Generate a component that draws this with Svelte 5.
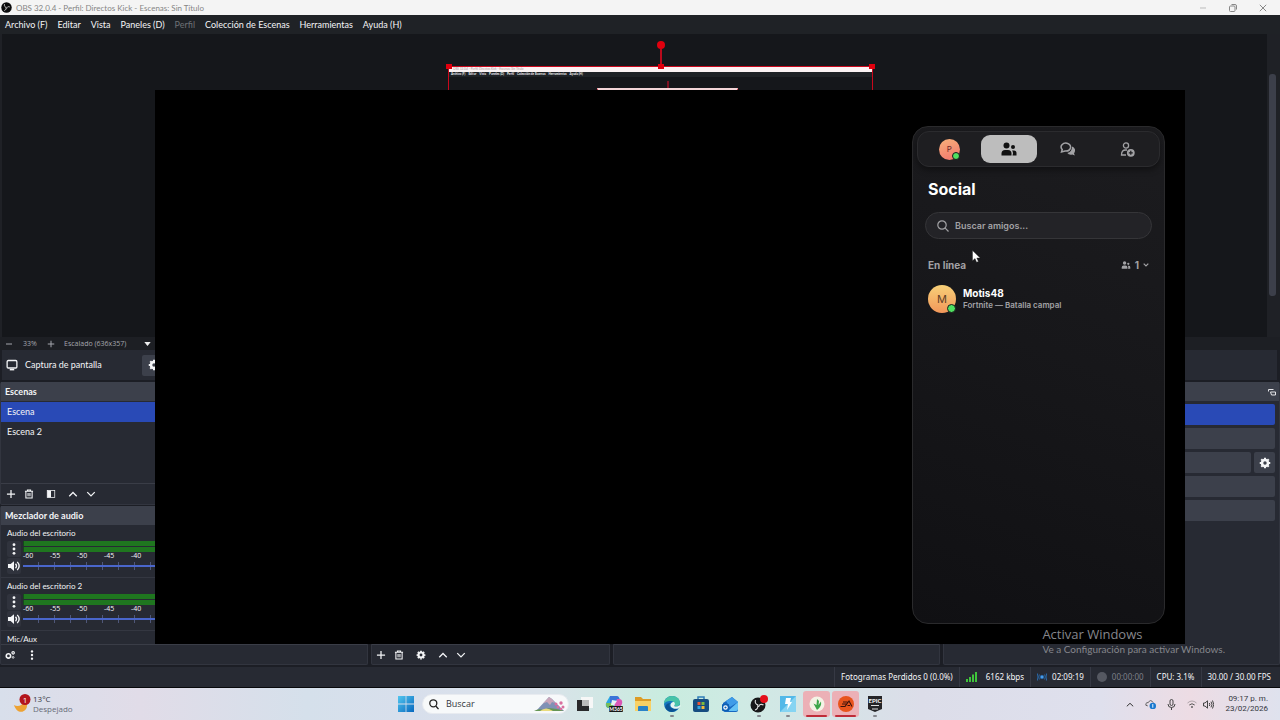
<script>
  const menus = [
    { label: 'Archivo (F)' },
    { label: 'Editar' },
    { label: 'Vista' },
    { label: 'Paneles (D)' },
    { label: 'Perfil', disabled: true },
    { label: 'Colección de Escenas' },
    { label: 'Herramientas' },
    { label: 'Ayuda (H)' }
  ];

  const scenes = ['Escena', 'Escena 2'];
  let activeScene = $state('Escena');

  const mixers = [
    { name: 'Audio del escritorio', volume: 100 },
    { name: 'Audio del escritorio 2', volume: 100 }
  ];
  const meterMarks = [-60, -55, -50, -45, -40, -35, -30, -25, -20, -15, -10, -5, 0];

  let scale = $state('window');
  let search = $state('');
  let socialTab = $state('friends');

  const taskbarApps = [
    { id: 'taskview', label: 'Vista de tareas' },
    { id: 'copilot', label: 'Copilot' },
    { id: 'files', label: 'Explorador de archivos' },
    { id: 'edge', label: 'Edge', running: true },
    { id: 'store', label: 'Microsoft Store' },
    { id: 'mail', label: 'Outlook' },
    { id: 'obs', label: 'OBS Studio', running: true },
    { id: 'fortnite', label: 'Fortnite', running: true },
    { id: 'plant', label: 'Los Sims', alert: true },
    { id: 'ea', label: 'EA', alert: true },
    { id: 'epic', label: 'Epic Games', running: true }
  ];
</script>

{#snippet icon(name)}
  <svg class="icon" viewBox="0 0 16 16" width="12" height="12" fill="none" stroke="currentColor" stroke-width="2" aria-hidden="true">
    {#if name === 'plus'}
      <path d="M8 1.500v13M1.500 8h13" />
    {:else if name === 'minus'}
      <path d="M2 8h12" />
    {:else if name === 'trash'}
      <path d="M1.500 3.500h13M5.500 3V1.500h5V3M3 4v10.500h10V4M6.500 6.500v5M9.500 6.500v5" stroke-width="1.700" />
    {:else if name === 'filter'}
      <rect x="2" y="2.500" width="12" height="11" stroke-width="1.200" />
      <path d="M2 2.500h6v11H2z" fill="currentColor" stroke="none" />
    {:else if name === 'up'}
      <path d="M2 11.500 8 5.500l6 6" />
    {:else if name === 'down'}
      <path d="M2 5 8 11l6-6" />
    {:else if name === 'dots'}
      <g fill="currentColor" stroke="none">
        <circle cx="8" cy="2.200" r="1.900" /><circle cx="8" cy="8" r="1.900" /><circle cx="8" cy="13.800" r="1.900" />
      </g>
    {:else if name === 'gear'}
      <circle cx="8" cy="8" r="4" stroke-width="3.400" />
      <path d="M8 1v2M8 13v2M1 8h2M13 8h2M3 3l1.500 1.500M11.500 11.500 13 13M13 3l-1.500 1.500M4.500 11.500 3 13" stroke-width="2.800" />
    {:else if name === 'gears'}
      <circle cx="5.500" cy="9.500" r="3.500" stroke-width="2.600" />
      <circle cx="13" cy="4.500" r="2" stroke-width="1.800" />
      <circle cx="13" cy="11.800" r="1.400" stroke-width="1.400" />
    {:else if name === 'speaker'}
      <path d="M0 5.200h3.500L8 1.500v13l-4.500-3.700H0z" fill="currentColor" stroke="none" />
      <path d="M10 5c1.600 1.800 1.600 4.200 0 6M12.300 2.500c3.200 3.400 3.200 7.600 0 11" stroke-width="1.800" />
    {:else if name === 'monitor'}
      <rect x="1.500" y="2" width="13" height="10" rx="1.500" stroke-width="1.700" />
      <path d="M5 14.200h6" />
    {/if}
  </svg>
{/snippet}

<div class="desktop">
  <header class="titlebar">
    <svg width="11" height="11" viewBox="0 0 20 20" aria-hidden="true">
      <circle cx="10" cy="10" r="9.500" fill="#0b0b0c" />
      <g fill="none" stroke="#d8d8d8" stroke-width="1.600">
        <path d="M6.500 4c-1.200 3 .5 5.300 3.200 5.500M16 9c-3-1.500-5.500.2-5.700 3M6 15.500c2.800-.8 4-3.400 2.600-5.500" />
      </g>
    </svg>
    <h1>OBS 32.0.4 - Perfil: Directos Kick - Escenas: Sin Título</h1>
    <div class="window-controls">
      <button aria-label="Minimizar"><svg width="8" height="8" viewBox="0 0 8 8"><path d="M1 4h6" stroke="#bbb" /></svg></button>
      <button aria-label="Restaurar">
        <svg width="8" height="8" viewBox="0 0 8 8" fill="none" stroke="#888"><rect x=".5" y="2" width="5.500" height="5.500" rx="1" /><path d="M2.500.5H6q1.500 0 1.500 1.500v3.500" /></svg>
      </button>
      <button aria-label="Cerrar"><svg width="8" height="8" viewBox="0 0 8 8"><path d="m.8.8 6.400 6.400m0-6.400L.8 7.200" stroke="#888" /></svg></button>
    </div>
  </header>

  <nav class="menubar">
    {#each menus as menu}
      <button disabled={menu.disabled}>{menu.label}</button>
    {/each}
  </nav>

  <section class="preview">
    <div class="canvas">
      <div class="source">
        <span class="stem"></span>
        <span class="handle round"></span>
        <span class="handle left"></span>
        <span class="handle middle"></span>
        <span class="handle right"></span>
        <div class="mini-title">OBS 32.0.4 - Perfil: Directos Kick - Escenas: Sin Título</div>
        <div class="mini-menu">
          {#each menus as menu}<span>{menu.label}</span>{/each}
        </div>
        <div class="inner-source"><span class="stem"></span></div>
      </div>
    </div>
    <div class="scroll-track"><div class="scroll-thumb"></div></div>
  </section>

  <div class="zoombar">
    <button aria-label="Alejar">{@render icon('minus')}</button>
    <span class="zoom-value">33%</span>
    <button aria-label="Acercar">{@render icon('plus')}</button>
    <select bind:value={scale} aria-label="Escala">
      <option value="window">Escalado (636x357)</option>
    </select>
    <svg width="7" height="4" viewBox="0 0 8 5" aria-hidden="true"><path d="M0 0h8L4 5z" fill="#eee" /></svg>
  </div>

  <div class="source-toolbar">
    {@render icon('monitor')}
    <span class="source-name">Captura de pantalla</span>
    <button class="btn" aria-label="Propiedades">{@render icon('gear')}</button>
  </div>

  <main class="docks">
    <div class="column">
      <section class="dock scenes">
        <h2>Escenas</h2>
        <div class="scene-list">
          {#each scenes as scene}
            <button class="scene" class:active={scene === activeScene} onclick={() => (activeScene = scene)}>{scene}</button>
          {/each}
        </div>
        <div class="toolbar">
          <button aria-label="Añadir escena">{@render icon('plus')}</button>
          <button aria-label="Eliminar escena">{@render icon('trash')}</button>
          <button class="spaced" aria-label="Filtros">{@render icon('filter')}</button>
          <button class="spaced" aria-label="Subir">{@render icon('up')}</button>
          <button aria-label="Bajar">{@render icon('down')}</button>
        </div>
      </section>

      <section class="dock mixer">
        <h2>Mezclador de audio</h2>
        <div class="channels">
          {#each mixers as mixer, i}
            <div class="channel">
              <label for="volume-{i}">{mixer.name}</label>
              <div class="channel-body">
                <div class="channel-buttons">
                  <button aria-label="Opciones">{@render icon('dots')}</button>
                  <button aria-label="Silenciar">{@render icon('speaker')}</button>
                </div>
                <div class="levels">
                  <div class="meter"><span></span><span></span></div>
                  <div class="marks">
                    {#each meterMarks as mark}<span>{mark}</span>{/each}
                  </div>
                  <input id="volume-{i}" type="range" value={mixer.volume} />
                </div>
              </div>
            </div>
          {/each}
          <div class="channel last"><span class="channel-name">Mic/Aux</span></div>
        </div>
        <div class="toolbar bottom">
          <button aria-label="Propiedades de audio">{@render icon('gears')}</button>
          <button class="spaced" aria-label="Más">{@render icon('dots')}</button>
        </div>
      </section>
    </div>

    <section class="dock">
      <div class="dock-body"></div>
      <div class="toolbar bottom">
        <button aria-label="Añadir fuente">{@render icon('plus')}</button>
        <button aria-label="Eliminar fuente">{@render icon('trash')}</button>
        <button class="spaced" aria-label="Propiedades de fuente">{@render icon('gear')}</button>
        <button class="spaced" aria-label="Subir fuente">{@render icon('up')}</button>
        <button aria-label="Bajar fuente">{@render icon('down')}</button>
      </div>
    </section>

    <section class="dock">
      <div class="dock-body"></div>
      <div class="toolbar bottom"></div>
    </section>

    <section class="dock controls">
      <div class="controls-head">
        <svg width="8" height="8" viewBox="0 0 8 8" fill="none" stroke="#e4e4e8"><path d="M.5 3.500v-2h5M2.500 4h5v3h-4z" /></svg>
      </div>
      <div class="control-list">
        <button class="btn primary" aria-label="Detener transmisión"></button>
        <button class="btn" aria-label="Iniciar grabación"></button>
        <div class="control-row">
          <button class="btn" aria-label="Cámara virtual"></button>
          <button class="btn square" aria-label="Configurar cámara virtual">{@render icon('gear')}</button>
        </div>
        <button class="btn" aria-label="Modo estudio"></button>
        <button class="btn" aria-label="Ajustes"></button>
      </div>
    </section>
  </main>

  <footer class="statusbar">
    <span>Fotogramas Perdidos 0 (0.0%)</span>
    <span class="bitrate">
      <svg width="11" height="10" viewBox="0 0 11 10" fill="#3fc43b"><path d="M0 7h2v3H0zM3 5h2v5H3zM6 2.500h2V10H6zM9 0h2v10H9z" /></svg>
      6162 kbps
    </span>
    <span>
      <svg width="10" height="8" viewBox="0 0 10 8" fill="none" stroke="#2a6cae"><circle cx="5" cy="4" r="1.700" fill="#4a9de8" /><path d="M2.300 1.500q-1.200 2.500 0 5M7.700 1.500q1.200 2.500 0 5M.6.5q-1.200 3.500 0 7M9.400.5q1.200 3.500 0 7" /></svg>
      02:09:19
    </span>
    <span class="idle"><i class="record-dot"></i>00:00:00</span>
    <span>CPU: 3.1%</span>
    <span>30.00 / 30.00 FPS</span>
  </footer>

  <footer class="taskbar">
    <button class="weather">
      <svg width="18" height="20" viewBox="0 0 18 20" aria-hidden="true">
        <path d="M1 11c3 2 8 1.500 10-4 3 2 4 5 2 8-3 4.500-9.500 4-12-4z" fill="#eda233" />
        <circle cx="12" cy="5.500" r="5.500" fill="#b3151c" />
        <text x="12" y="8.500" text-anchor="middle" font-size="8" fill="#fff">1</text>
      </svg>
      <span class="weather-text"><span>13°C</span><span class="muted">Despejado</span></span>
    </button>

    <div class="apps">
      <button class="start" aria-label="Inicio">
        <svg width="16" height="16" viewBox="0 0 16 16">
          <defs><linearGradient id="win" x2="1" y2="1"><stop stop-color="#52c6ef" /><stop offset="1" stop-color="#0868bf" /></linearGradient></defs>
          <path d="M0 0h7.600v7.600H0zM8.400 0H16v7.600H8.400zM0 8.400h7.600V16H0zM8.400 8.400H16V16H8.400z" fill="url(#win)" />
        </svg>
      </button>
      <label class="taskbar-search">
        <svg width="10" height="11" viewBox="0 0 10 11" fill="none" stroke="#222" stroke-width="1.300"><circle cx="4.300" cy="4.300" r="3.500" /><path d="m6.800 7 2.700 3.200" /></svg>
        <input type="text" placeholder="Buscar" aria-label="Buscar en Windows" />
        <svg width="32" height="16" viewBox="0 0 32 16" aria-hidden="true">
          <path d="m2 15 13-14 3 2 12 12z" fill="#7f91b5" />
          <path d="m9 7.500 6-6.500 3 2 3 4-3-1-2 3-3-3z" fill="#c8a5b9" />
          <path d="M0 15q5-3 9-1 6-4 21 1z" fill="#659653" />
          <path d="M6 15q6-5 13 0z" fill="#eadb7c" />
          <g fill="#d96f9f"><circle cx="22" cy="8" r="1.500" /><circle cx="27" cy="7" r="1.700" /><circle cx="29" cy="11" r="1.500" /><circle cx="24" cy="11" r="1.500" /><circle cx="27" cy="13" r="1.200" /></g>
        </svg>
      </label>
      {#each taskbarApps as app}
        <button class="app" class:running={app.running} class:alert={app.alert} aria-label={app.label}>
          <svg width="18" height="18" viewBox="0 0 18 18">
            {#if app.id === 'taskview'}
              <path d="M5 2h12v11H5z" fill="#f7f7f7" /><path d="M1 5h5v6h7v5H1z" fill="#29292b" /><path d="M6 5h7v6H6z" fill="#bbb" />
            {:else if app.id === 'copilot'}
              <path d="M5 1h5l2 4-5 8H3q-3-1-2-5z" fill="#2aa5e5" />
              <path d="M5 1h7q2 0 3 4H8L5 9z" fill="#3b74d8" />
              <path d="M12 4h3q3 1 2 5l-3 5H8z" fill="#d957b5" />
              <path d="M1 8h8l-2 5H3q-2-1-2-3z" fill="#75bd5a" />
              <path d="m7 5 5 1-3 4H6z" fill="#e9eff4" />
              <rect x="4" y="11" width="14" height="6" rx="1" fill="#171717" />
              <text x="11" y="16" font-size="5" font-weight="700" fill="#fff" text-anchor="middle">M365</text>
            {:else if app.id === 'files'}
              <path d="M1 2h6l2 2h8v5H1z" fill="#dd9c26" /><path d="M1 6h16v10H1z" fill="#f8d165" /><path d="M4 12q0-1 1-1h8q1 0 1 1v4H4z" fill="#2a83c8" />
            {:else if app.id === 'edge'}
              <circle cx="9" cy="9" r="8" fill="#1576bf" />
              <path d="M1 9C1 4 5 1 9 1c5 0 8 3 8 7 0 3-3 4-6 3 2-3-1-5-4-5-3 0-5 1-6 3z" fill="#47c3a8" />
              <path d="M7 8c-2 4 2 7 8 5-3 5-9 5-12 1-2-3 1-6 4-6z" fill="#0b5394" />
              <path d="M11 7c1.500 1.300 1 2.700 0 4 2 1 4.500.5 6-1l1 1-3 2.500c-4 1-8-1-7.500-4 .3-1.500 2-3 3.500-2.500z" fill="#e5f5f0" />
            {:else if app.id === 'store'}
              <path d="M6 4V2h6v2" fill="none" stroke="#2f7db8" stroke-width="1.500" /><rect x="1" y="4" width="16" height="13" rx="2" fill="#164d80" />
              <path d="M5.500 7h3v3h-3z" fill="#e85535" /><path d="M9.500 7h3v3h-3z" fill="#7dbb3d" /><path d="M5.500 11h3v3h-3z" fill="#35a5e0" /><path d="M9.500 11h3v3h-3z" fill="#f2ba3a" />
            {:else if app.id === 'mail'}
              <path d="m2 8 9-6 6 5v8q0 2-2 2H5q-3 0-3-2z" fill="#1767c0" /><path d="m5 6 6-4 6 5-8 5z" fill="#3f9ce8" /><path d="m7 16 10-9v7q0 2-2 2z" fill="#65c2f5" />
              <rect x="1" y="9" width="7" height="7" rx="1" fill="#0c5eb4" /><circle cx="4.500" cy="12.500" r="1.700" fill="none" stroke="#fff" stroke-width="1.200" />
            {:else if app.id === 'obs'}
              <circle cx="8" cy="10" r="7.500" fill="#171719" />
              <path d="M5.500 5c-1 3 .8 4.800 2.800 4.800M13.500 10c-2.500-1.500-4.500-.2-4.800 2M5 15c2.500-.8 3.400-3 2.500-4.700" fill="none" stroke="#ddd" stroke-width="1.100" />
              <circle cx="14" cy="4" r="4" fill="#e4101b" />
            {:else if app.id === 'fortnite'}
              <rect x="1" y="1" width="16" height="16" fill="#54b9e8" /><path d="M1 17 17 1v16z" fill="#86d4f2" /><path d="M7 3h5l-1 4h2l-5 8 1-6H6z" fill="#fff" />
            {:else if app.id === 'plant'}
              <circle cx="9" cy="9" r="7.500" fill="#f4f3e6" /><path d="M9 15 5.500 8.500 8.500 10 9 4l2 2-.5 4 2.500-3.500q1 5-4 8.500z" fill="#3ba64a" />
            {:else if app.id === 'ea'}
              <circle cx="9" cy="9" r="8" fill="#e8541c" /><path d="M6 7h4.500M5 9h4.500M3.500 11.500H8l4-5.500 3 5.500M10.500 10.500h2.500" fill="none" stroke="#3a120c" stroke-width="1.100" />
            {:else}
              <path d="M2 1h14v13l-7 3-7-3z" fill="#252528" />
              <text x="9" y="8" font-size="6" font-weight="700" fill="#fff" text-anchor="middle">EPIC</text>
              <path d="M5 10.500h8M6 14h6" stroke="#ddd" />
            {/if}
          </svg>
        </button>
      {/each}
    </div>

    <div class="tray">
      <svg width="8" height="5" viewBox="0 0 8 5" fill="none" stroke="#333"><path d="m.8 4.300 3.200-3 3.200 3" /></svg>
      <svg width="11" height="11" viewBox="0 0 12 11"><path d="M3 7Q0 7 1 4.500 2 3 3.500 3.500 6-1 9 3.500" fill="none" stroke="#555" /><circle cx="8.500" cy="7" r="3.500" fill="#1979cf" /><path d="M8.500 5v4" stroke="#fff" /></svg>
      <svg width="9" height="11" viewBox="0 0 9 11" fill="none" stroke="#444"><rect x="3" y=".5" width="3" height="6" rx="1.500" /><path d="M1 5q0 3.500 3.500 3.500T8 5M4.500 8.500V11" /></svg>
      <span class="tray-group">
        <svg width="10" height="8" viewBox="0 0 10 8" fill="none" stroke="#555"><path d="M.5 3q4.500-4 9 0" opacity=".4" /><path d="M2.300 5q2.700-2.500 5.400 0" /><circle cx="5" cy="7" r=".6" /></svg>
        <svg width="11" height="9" viewBox="0 0 11 9" fill="none" stroke="#444"><path d="M.5 3H2l2.500-2.200v7.400L2 6H.5zM6.300 3q1 1.500 0 3M8 1.700q2 2.800 0 5.600M9.500.5q2.500 4 0 8" /></svg>
      </span>
      <div class="clock"><span>09:17 p. m.</span><span>23/02/2026</span></div>
    </div>
  </footer>

  <div class="overlay">
    <aside class="social">
      <nav class="social-tabs">
        <button class:active={socialTab === 'profile'} aria-label="Perfil" onclick={() => (socialTab = 'profile')}>
          <span class="avatar small">P<i class="online"></i></span>
        </button>
        <button class:active={socialTab === 'friends'} aria-label="Amigos" onclick={() => (socialTab = 'friends')}>
          <svg width="16" height="14" viewBox="0 0 16 14" fill="currentColor"><circle cx="5.500" cy="3.500" r="3" /><path d="M.5 13.500v-2Q.5 8 4 8h3q3.500 0 3.500 3.500v2z" /><circle cx="12" cy="5" r="2" /><path d="M11.500 13.500H15.500V11q0-2.500-2.500-2.500h-2q1 1.200 1 3z" /></svg>
        </button>
        <button class:active={socialTab === 'chat'} aria-label="Mensajes" onclick={() => (socialTab = 'chat')}>
          <svg width="16" height="14" viewBox="0 0 16 14"><path d="M12 4.500q3.500 1.500 3 4.500-.2 1.500-1 2.200l.8 2.300-2.500-1q-3.300.8-5-1.500Q12 10 12 4.500z" fill="currentColor" /><path d="m1.500 10 .7-2.400Q0 5 2 2.700 4 .5 7 1.200q4 1 3.500 4.500Q9.500 9.500 5 9z" fill="none" stroke="currentColor" stroke-width="1.500" /></svg>
        </button>
        <button class:active={socialTab === 'add'} aria-label="Añadir amigo" onclick={() => (socialTab = 'add')}>
          <svg width="15" height="15" viewBox="0 0 15 15"><circle cx="6" cy="3.500" r="2.600" fill="none" stroke="currentColor" stroke-width="1.300" /><path d="M7 8H5.500Q1.500 8 1.500 13H6" fill="none" stroke="currentColor" stroke-width="1.300" /><circle cx="10.800" cy="10.800" r="3.900" fill="currentColor" /><path d="M10.800 8.800v4M8.800 10.800h4" stroke="#1d1d20" stroke-width="1.200" /></svg>
        </button>
      </nav>
      <div class="social-body">
        <h2>Social</h2>
        <label class="friend-search">
          <svg width="12" height="12" viewBox="0 0 12 12" fill="none" stroke="currentColor" stroke-width="1.200"><circle cx="5" cy="5" r="4.200" /><path d="m8.200 8.200 3.300 3.300" /></svg>
          <input type="text" placeholder="Buscar amigos..." aria-label="Buscar amigos" bind:value={search} />
        </label>
        <div class="group">
          <h3>En línea</h3>
          <button class="count">
            <svg width="10" height="8" viewBox="0 0 16 14" fill="currentColor"><circle cx="5.500" cy="3.500" r="3" /><path d="M.5 13.500v-2Q.5 8 4 8h3q3.500 0 3.500 3.500v2z" /><circle cx="12" cy="5" r="2" /><path d="M11.500 13.500H15.500V11q0-2.500-2.500-2.500h-2q1 1.200 1 3z" /></svg>
            1
            <svg width="6" height="4" viewBox="0 0 6 4" fill="none" stroke="currentColor" stroke-width="1.200"><path d="m.7.7 2.300 2.300L5.300.7" /></svg>
          </button>
        </div>
        <div class="friend">
          <span class="avatar">M<i class="online"></i></span>
          <div class="friend-text">
            <strong>Motis48</strong>
            <span>Fortnite — Batalla campal</span>
          </div>
        </div>
      </div>
    </aside>
    <svg class="cursor" width="9" height="13" viewBox="0 0 9 13" aria-hidden="true"><path d="M.5.5v10.300L3 8.600l1.600 3.700 1.800-.8-1.600-3.500h3.400z" fill="#fff" stroke="#222" stroke-width=".4" /></svg>
  </div>

  <div class="watermark">
    <p class="watermark-title">Activar Windows</p>
    <p>Ve a Configuración para activar Windows.</p>
  </div>
</div>

<style>
  :global(body) {
    margin: 0;
    background: #1c1e25;
  }

  .desktop {
    position: relative;
    display: flex;
    flex-direction: column;
    height: 100vh;
    overflow: hidden;
    font-family: Lato, 'Open Sans', sans-serif;
    font-size: 9px;
    line-height: 12px;
    color: #f4f5f7;
  }

  .desktop :is(button, input, select) {
    margin: 0;
    padding: 0;
    border: 0;
    background: none;
    font: inherit;
    color: inherit;
  }

  svg {
    display: block;
    flex: none;
  }

  h1,
  h2,
  h3,
  p {
    margin: 0;
    font-size: inherit;
    font-weight: 400;
  }

  .titlebar {
    display: flex;
    align-items: center;
    gap: 4px;
    height: 15px;
    padding: 0 13px 0 1px;
    background: #f4f4f4;
    color: #858585;
    font-size: 8px;
  }

  .titlebar h1 {
    flex: 1;
  }

  .window-controls {
    display: flex;
    gap: 22px;
  }

  .menubar {
    display: flex;
    gap: 10px;
    height: 19px;
    box-sizing: border-box;
    padding: 0 5px;
    background: #1f2226;
  }

  .menubar button:disabled {
    color: #6d7075;
  }

  .preview {
    display: flex;
    height: 303px;
    background: #1f2126;
  }

  .canvas {
    position: relative;
    flex: 1;
    margin-left: 2px;
    background: #15171b;
    overflow: hidden;
  }

  .scroll-track {
    width: 13px;
    padding: 40px 4px 41px 2px;
    box-sizing: border-box;
  }

  .scroll-thumb {
    height: 100%;
    border-radius: 3px;
    background: #3c3f4a;
  }

  .source {
    position: absolute;
    top: 32px;
    left: 446px;
    width: 425px;
    height: 238px;
    box-sizing: border-box;
    border: 1px solid #c9081c;
    background: #15171b;
    font-size: 3px;
    line-height: 5px;
  }

  .stem {
    position: absolute;
    top: -18px;
    left: calc(50% - 1px);
    width: 2px;
    height: 18px;
    background: #b90a1c;
  }

  .handle {
    position: absolute;
    top: -3px;
    width: 6px;
    height: 5px;
    background: #e0000e;
  }

  .handle.left {
    left: -3px;
  }

  .handle.middle {
    left: calc(50% - 3px);
  }

  .handle.right {
    right: -3px;
  }

  .handle.round {
    top: -26px;
    left: calc(50% - 4px);
    width: 8px;
    height: 8px;
    border-radius: 50%;
  }

  .mini-title {
    height: 5px;
    padding-left: 4px;
    background: #fbf3f4;
    color: #a99;
  }

  .mini-menu {
    display: flex;
    gap: 3px;
    height: 5px;
    padding-left: 2px;
    background: #1f2226;
    font-weight: 700;
  }

  .inner-source {
    position: absolute;
    top: 21px;
    left: 148px;
    width: 139px;
    height: 78px;
    border: 1px solid #c9081c;
    border-top: 2px solid #f3d5d8;
  }

  .inner-source .stem {
    top: -9px;
    height: 7px;
    background: #7d1022;
  }

  .zoombar {
    display: flex;
    align-items: center;
    height: 13px;
    padding-left: 5px;
    background: #1d1f24;
    color: #a5a7ad;
    font-family: 'Open Sans', sans-serif;
    font-size: 7px;
  }

  .zoombar .icon {
    width: 8px;
    height: 8px;
  }

  .zoom-value {
    width: 34px;
    text-align: center;
  }

  .zoombar select {
    appearance: none;
    width: 80px;
    margin-left: 9px;
  }

  .source-toolbar {
    display: flex;
    align-items: center;
    gap: 7px;
    height: 30px;
    margin: 0 3px 2px 2px;
    padding-left: 4px;
    background: #272a33;
  }

  .source-name {
    width: 110px;
  }

  .btn {
    display: flex;
    align-items: center;
    justify-content: center;
    height: 21px;
    border-radius: 2px;
  }

  .desktop .btn {
    background: #3c404b;
  }

  .source-toolbar .btn {
    width: 24px;
  }

  .docks {
    display: grid;
    grid-template-columns: 368fr 239fr 327fr 337fr;
    gap: 3px;
    flex: 1;
    min-height: 0;
  }

  .column,
  .dock {
    display: flex;
    flex-direction: column;
    min-width: 0;
    min-height: 0;
  }

  .column {
    gap: 1px;
  }

  .dock {
    box-sizing: border-box;
    border: 1px solid #32353f;
    border-top: 0;
    border-radius: 2px;
    background: #272a33;
  }

  .mixer {
    flex: 1;
  }

  .dock h2,
  .controls-head {
    height: 19px;
    background: #3c404b;
    font-weight: 700;
    line-height: 19px;
  }

  .dock h2 {
    padding-left: 4px;
  }

  .scene-list {
    height: 82px;
    box-sizing: border-box;
    padding-top: 1px;
  }

  .scene {
    display: block;
    width: 100%;
    height: 20px;
    text-align: left;
  }

  .desktop .scene {
    padding-left: 6px;
  }

  .desktop .scene.active {
    background: #294ab6;
  }

  .toolbar {
    display: flex;
    align-items: center;
    gap: 6px;
    height: 20px;
    padding-left: 4px;
    border-top: 1px solid #3a3d47;
  }

  .toolbar .icon {
    width: 12px;
    height: 10px;
  }

  .desktop .toolbar .spaced {
    margin-left: 4px;
  }

  .toolbar.bottom {
    flex: none;
    height: 19px;
    padding-left: 3px;
  }

  .dock-body {
    flex: 1;
  }

  .channels {
    flex: 1;
    min-height: 0;
    overflow: hidden;
    font-size: 8px;
  }

  .channel {
    height: 53px;
    box-sizing: border-box;
    padding: 2px 6px 0;
    border-bottom: 1px solid #343741;
  }

  .channel.last {
    height: auto;
    border-bottom: 0;
  }

  .channel label,
  .channel-name {
    display: block;
  }

  .channel-body {
    display: flex;
    gap: 2px;
  }

  .channel-buttons {
    display: flex;
    flex-direction: column;
    gap: 1px;
    padding-top: 2px;
  }

  .desktop .channel-buttons button {
    display: flex;
    align-items: center;
    justify-content: center;
    width: 14px;
    height: 16px;
    border-radius: 2px;
    background: #30333d;
  }

  .levels {
    flex: 1;
    min-width: 0;
  }

  .meter {
    display: flex;
    flex-direction: column;
    gap: 1px;
    padding-top: 2px;
  }

  .meter span {
    height: 5px;
    background: #1f761f;
    border-left: 1px solid #154a1b;
  }

  .marks {
    display: flex;
    justify-content: space-between;
    height: 10px;
    margin-right: 14px;
    font-family: 'Open Sans', sans-serif;
    font-size: 7px;
    line-height: 7px;
  }

  .levels input {
    display: block;
    appearance: none;
    width: 100%;
    height: 8px;
  }

  .desktop .levels input {
    background:
      linear-gradient(#4a66cb, #4a66cb) 0 3px / 100% 2px no-repeat,
      repeating-linear-gradient(90deg, transparent 0 15px, #4f577a 15px 16px);
  }

  .levels input::-webkit-slider-thumb {
    appearance: none;
    width: 10px;
    height: 8px;
    border-radius: 2px;
    background: #fff;
  }

  .controls-head {
    display: flex;
    align-items: center;
    justify-content: flex-end;
    padding-right: 3px;
  }

  .control-list {
    display: flex;
    flex-direction: column;
    gap: 3px;
    padding: 3px 4px;
  }

  .desktop .btn.primary {
    background: #294ab6;
  }

  .control-row {
    display: flex;
    gap: 3px;
  }

  .control-row .btn {
    flex: 1;
  }

  .control-row .square {
    flex: 0 0 21px;
  }

  .statusbar {
    display: flex;
    justify-content: flex-end;
    height: 20px;
    margin-top: 2px;
    padding-right: 3px;
    border-bottom: 1px solid #08090c;
    background: #272a33;
    font-family: 'Noto Sans', sans-serif;
    font-size: 8px;
    line-height: 20px;
  }

  .statusbar span {
    display: flex;
    align-items: center;
    gap: 5px;
    padding: 0 6px;
    border-left: 1px solid #363944;
  }

  .statusbar .bitrate {
    gap: 9px;
  }

  .statusbar .idle {
    color: #7c7f87;
  }

  .record-dot {
    width: 10px;
    height: 10px;
    border-radius: 50%;
    background: #555861;
  }

  .taskbar {
    display: grid;
    grid-template-columns: 1fr auto 1fr;
    align-items: center;
    height: 32px;
    background: linear-gradient(90deg, #d8dfeb, #e1dce8 11%, #d5e0eb 24%, #d8dfec 32%, #dae2ea 42%, #c9ecdf 52%, #cfeae4 58%, #dcdde9 72%, #dfe0ed 86%, #eddce4 93%, #dfe2ee);
    color: #333640;
    font-size: 8px;
  }

  .desktop .weather {
    display: flex;
    align-items: center;
    gap: 2px;
    padding-left: 13px;
    font-family: 'Open Sans', sans-serif;
    text-align: left;
  }

  .weather-text,
  .clock {
    display: flex;
    flex-direction: column;
    line-height: 10px;
  }

  .muted {
    color: #676b77;
  }

  .apps {
    display: flex;
    align-items: center;
    gap: 2px;
  }

  .start {
    display: flex;
    justify-content: center;
    width: 28px;
  }

  .taskbar-search {
    display: flex;
    align-items: center;
    gap: 7px;
    width: 147px;
    height: 20px;
    box-sizing: border-box;
    padding: 0 2px 0 6px;
    border: 1px solid #e8ebf0;
    border-radius: 10px;
    background: #f7f9fa;
    font-family: 'Open Sans', sans-serif;
    font-size: 9px;
  }

  .taskbar-search input {
    flex: 1;
    min-width: 0;
  }

  .desktop input::placeholder {
    color: inherit;
    opacity: 1;
  }

  .app {
    position: relative;
    display: flex;
    align-items: center;
    justify-content: center;
    width: 27px;
    height: 26px;
    border-radius: 3px;
  }

  .desktop .app.alert {
    background: #ecb0b6;
  }

  .app.running::after,
  .app.alert::after {
    content: '';
    position: absolute;
    bottom: 0;
    left: calc(50% - 2px);
    width: 4px;
    height: 2px;
    border-radius: 1px;
    background: #85878e;
  }

  .app.alert::after {
    left: 3px;
    width: 21px;
    background: #bf2b38;
  }

  .tray {
    display: flex;
    align-items: center;
    justify-content: flex-end;
    gap: 11px;
    padding-right: 12px;
    font-family: Roboto, sans-serif;
  }

  .tray-group {
    display: flex;
    align-items: center;
    gap: 6px;
  }

  .clock {
    text-align: right;
  }

  .overlay {
    position: absolute;
    top: 90px;
    right: 95px;
    bottom: 76px;
    left: 155px;
    display: flex;
    justify-content: flex-end;
    box-sizing: border-box;
    padding: 36px 20px 20px;
    background: #000;
    font-family: Inter, sans-serif;
  }

  .social {
    width: 253px;
    box-sizing: border-box;
    padding: 4px;
    border: 1px solid #2a2a2c;
    border-radius: 16px;
    background: linear-gradient(200deg, #1c1c1f, #17171a 45%, #101013);
    color: #a2a2a5;
  }

  .social-tabs {
    display: grid;
    grid-template-columns: repeat(4, 1fr);
    gap: 3px;
    padding: 3px;
    border: 1px solid #2b2b2e;
    border-radius: 12px;
    background: #1e1e21;
    box-shadow: 0 3px 6px rgba(0, 0, 0, 0.4);
  }

  .social-tabs button {
    display: flex;
    align-items: center;
    justify-content: center;
    height: 28px;
    border-radius: 9px;
  }

  .desktop .social-tabs button.active {
    background: #bdbdbd;
    color: #111;
  }

  .avatar {
    position: relative;
    display: flex;
    align-items: center;
    justify-content: center;
    flex: none;
    width: 28px;
    height: 28px;
    border-radius: 50%;
    background: linear-gradient(#f7d078, #f2975a);
    color: #5f3e25;
    font-size: 11px;
  }

  .avatar.small {
    width: 21px;
    height: 21px;
    background: linear-gradient(160deg, #f8b17a, #f0746d);
    color: #6b2727;
    font-size: 8px;
  }

  .online {
    position: absolute;
    right: 0;
    bottom: 0;
    width: 7px;
    height: 7px;
    border: 1px solid #18181b;
    border-radius: 50%;
    background: #4fe060;
  }

  .small .online {
    width: 6px;
    height: 6px;
  }

  .social-body {
    padding: 11px 8px;
  }

  .social-body h2 {
    padding: 0 3px;
    color: #fff;
    font-size: 16px;
    font-weight: 700;
    line-height: 22px;
  }

  .friend-search {
    display: flex;
    align-items: center;
    gap: 6px;
    height: 27px;
    box-sizing: border-box;
    margin-top: 12px;
    padding: 0 11px;
    border: 1px solid #353538;
    border-radius: 14px;
    background: #232327;
    font-size: 9px;
    font-weight: 600;
  }

  .friend-search input {
    flex: 1;
    min-width: 0;
  }

  .group {
    display: flex;
    align-items: center;
    justify-content: space-between;
    margin-top: 20px;
    padding: 0 3px;
    font-size: 10px;
  }

  .group h3 {
    font-weight: 700;
  }

  .count {
    display: flex;
    align-items: center;
    gap: 4px;
  }

  .desktop .count {
    font-weight: 700;
  }

  .friend {
    display: flex;
    align-items: center;
    gap: 7px;
    margin-top: 14px;
    padding: 0 3px;
  }

  .friend-text {
    display: flex;
    flex-direction: column;
    font-size: 8px;
    font-weight: 600;
  }

  .friend-text strong {
    color: #fff;
    font-size: 10px;
    font-weight: 700;
  }

  .cursor {
    position: absolute;
    top: 160px;
    left: 817px;
  }

  .watermark {
    position: absolute;
    right: 55px;
    bottom: 65px;
    color: #85868c;
    font-size: 10px;
  }

  .watermark-title {
    font-family: 'Open Sans', sans-serif;
    font-size: 13px;
    line-height: 18px;
  }
</style>
